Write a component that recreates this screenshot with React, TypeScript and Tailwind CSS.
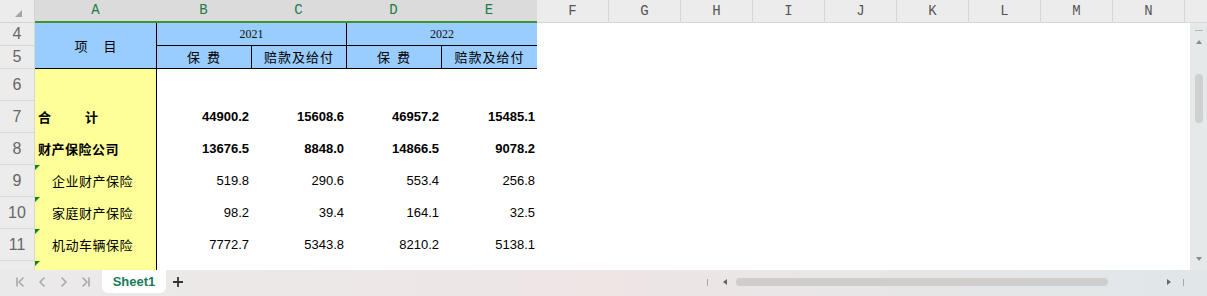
import React from "react";

const colHeads = [
  { label: "A", w: "w-[121px]", sel: true },
  { label: "B", w: "w-[95px]", sel: true },
  { label: "C", w: "w-[95px]", sel: true },
  { label: "D", w: "w-[95px]", sel: true },
  { label: "E", w: "w-[96px]", sel: true },
  { label: "F", w: "w-[72px]", sel: false },
  { label: "G", w: "w-[72px]", sel: false },
  { label: "H", w: "w-[72px]", sel: false },
  { label: "I", w: "w-[72px]", sel: false },
  { label: "J", w: "w-[72px]", sel: false },
  { label: "K", w: "w-[72px]", sel: false },
  { label: "L", w: "w-[72px]", sel: false },
  { label: "M", w: "w-[72px]", sel: false },
  { label: "N", w: "w-[72px]", sel: false },
];

// row 12 is cut off by the sheet tabs, its number is not visible
const rowHeads = [
  { n: "4", h: "h-[23px]" },
  { n: "5", h: "h-[23px]" },
  { n: "6", h: "h-[32px]" },
  { n: "7", h: "h-[32px]" },
  { n: "8", h: "h-[32px]" },
  { n: "9", h: "h-[32px]" },
  { n: "10", h: "h-[32px]" },
  { n: "11", h: "h-[32px]" },
  { n: "", h: "h-[32px]" },
];

type Row = {
  name: string;
  bold?: boolean;
  mark?: boolean;
  values: string[];
};

const rows: Row[] = [
  { name: "", values: ["", "", "", ""] },
  { name: "合计", bold: true, values: ["44900.2", "15608.6", "46957.2", "15485.1"] },
  { name: "财产保险公司", bold: true, values: ["13676.5", "8848.0", "14866.5", "9078.2"] },
  { name: "企业财产保险", mark: true, values: ["519.8", "290.6", "553.4", "256.8"] },
  { name: "家庭财产保险", mark: true, values: ["98.2", "39.4", "164.1", "32.5"] },
  { name: "机动车辆保险", mark: true, values: ["7772.7", "5343.8", "8210.2", "5138.1"] },
  { name: "", mark: true, values: ["", "", "", ""] },
];

const valueWidths = ["w-[95px]", "w-[95px]", "w-[95px]", "w-[96px]"];

const cjk = "font-['Noto_Sans_CJK_SC',sans-serif]";
const num = "font-['Liberation_Sans','Noto_Sans_CJK_SC',sans-serif]";

function Mark() {
  return (
    <span className="absolute left-0 top-0 w-0 h-0 border-t-[5px] border-t-[#13801f] border-r-[5px] border-r-transparent" />
  );
}

function ColumnHeader() {
  return (
    <div className="flex h-[23px] shrink-0 font-['Liberation_Mono',monospace] text-[14px]">
      <div className="w-[35px] h-full bg-[#ececec] border-b border-r border-[#d4d4d4] relative">
        <span className="absolute left-[15px] top-[10px] w-0 h-0 border-b-[7px] border-b-[#a4a4a4] border-l-[7px] border-l-transparent" />
      </div>
      {colHeads.map((c) =>
        c.sel ? (
          <div
            key={c.label}
            className={`${c.w} h-full bg-[#dbdbdb] border-b-2 border-[#3e9430] flex items-center justify-center text-[#1b7a45]`}
          >
            {c.label}
          </div>
        ) : (
          <div
            key={c.label}
            className={`${c.w} h-full bg-[#ececec] border-b border-r border-[#d6d6d6] flex items-center justify-center text-[#555]`}
          >
            {c.label}
          </div>
        )
      )}
      <div className="flex-1 h-full bg-[#ececec] border-b border-[#d6d6d6]" />
    </div>
  );
}

function RowHeader() {
  return (
    <div className="w-[35px] shrink-0 bg-[#ececec] border-r border-[#d8d8d8] flex flex-col font-['Liberation_Sans_Narrow','Liberation_Sans',sans-serif] text-[16px] text-[#666]">
      {rowHeads.map((r, i) => (
        <div
          key={i}
          className={`${r.h} shrink-0 border-b border-[#d6d6d6] flex items-center justify-center`}
        >
          {r.n}
        </div>
      ))}
    </div>
  );
}

function TableHead() {
  return (
    <div className="flex h-[46px] shrink-0">
      <div className={`w-[121px] h-full bg-[#99ccff] border-b border-black flex items-center justify-center gap-[16px] text-[13px] text-black ${cjk}`}>
        <span>项</span>
        <span>目</span>
      </div>
      <div className="flex flex-col w-[381px]">
        <div className="flex h-[23px] font-['Liberation_Serif',serif] text-[12px] text-[#111]">
          <div className="w-[190px] bg-[#99ccff] border-l border-b border-black flex items-center justify-center">
            2021
          </div>
          <div className="w-[191px] bg-[#99ccff] border-l border-b border-black flex items-center justify-center">
            2022
          </div>
        </div>
        <div className={`flex h-[23px] text-[13px] text-black ${cjk}`}>
          {["保费", "赔款及给付", "保费", "赔款及给付"].map((t, i) => (
            <div
              key={i}
              className={`${valueWidths[i]} bg-[#99ccff] border-l border-b border-black flex items-center justify-center tracking-[1px]`}
            >
              {t === "保费" ? (
                <span className="flex gap-[6px]">
                  <span>保</span>
                  <span>费</span>
                </span>
              ) : (
                t
              )}
            </div>
          ))}
        </div>
      </div>
      <div className="flex-1 bg-white" />
    </div>
  );
}

function DataRow({ row }: { row: Row }) {
  return (
    <div className="flex h-[32px] shrink-0">
      <div
        className={`relative w-[121px] h-full bg-[#ffff99] flex items-center text-[13px] text-black ${cjk} ${
          row.bold ? "font-bold pl-[3px]" : "pl-[17px]"
        }`}
      >
        {row.mark && <Mark />}
        {row.name === "合计" ? (
          <span className="flex gap-[34px]">
            <span>合</span>
            <span>计</span>
          </span>
        ) : (
          <span className="tracking-[0.5px]">{row.name}</span>
        )}
      </div>
      {row.values.map((v, i) => (
        <div
          key={i}
          className={`${valueWidths[i]} h-full flex items-center justify-end pr-[2px] text-[13px] text-black ${num} ${
            i === 0 ? "border-l border-black" : ""
          } ${row.bold ? "font-bold" : ""}`}
        >
          {v}
        </div>
      ))}
      <div className="flex-1 bg-white" />
    </div>
  );
}

function VScroll() {
  return (
    <div className="w-[17px] shrink-0 bg-[#e6e9e9] flex flex-col items-center pt-[7px] pb-[9px]">
      <div className="w-[8px] h-[1px] bg-[#b5b8b8]" />
      <span className="mt-[9px] w-0 h-0 border-l-[3px] border-r-[3px] border-b-[4px] border-l-transparent border-r-transparent border-b-[#8a8d8d]" />
      <div className="mt-[30px] w-[8px] h-[49px] rounded-full bg-[#cfd1d1]" />
      <div className="flex-1" />
      <span className="w-0 h-0 border-l-[3px] border-r-[3px] border-t-[4px] border-l-transparent border-r-transparent border-t-[#8a8d8d]" />
    </div>
  );
}

function NavIcon({ d }: { d: string }) {
  return (
    <svg width="12" height="12" viewBox="0 0 12 12" fill="none" stroke="#a8a8a8" strokeWidth="1.6" strokeLinecap="round" strokeLinejoin="round">
      <path d={d} />
    </svg>
  );
}

function BottomBar() {
  return (
    <div className="h-[26px] shrink-0 flex items-start bg-gradient-to-r from-[#ebeaea] via-[#eee5e5] to-[#e0e7e9]">
      <div className="flex items-center h-[24px] pl-[14px] gap-[10px] w-[102px]">
        <NavIcon d="M3 2v8M9 2L5 6l4 4" />
        <NavIcon d="M8 2L4 6l4 4" />
        <NavIcon d="M4 2l4 4-4 4" />
        <NavIcon d="M3 2l4 4-4 4M9 2v8" />
      </div>
      <div className="w-[64px] h-[23px] bg-white rounded-b-[6px] flex items-center justify-center text-[13px] font-bold text-[#1b7a5a] font-['Liberation_Sans',sans-serif]">
        Sheet1
      </div>
      <div className="h-[24px] flex items-center pl-[6px]">
        <svg width="12" height="12" viewBox="0 0 12 12" stroke="#333" strokeWidth="1.8">
          <path d="M6 1v10M1 6h10" />
        </svg>
      </div>
      <div className="flex-1" />
      <div className="h-[24px] flex items-center w-[500px] pr-[23px]">
        <div className="w-[1px] h-[7px] bg-[#a8a8a8]" />
        <span className="ml-[15px] w-0 h-0 border-t-[3px] border-b-[3px] border-r-[4px] border-t-transparent border-b-transparent border-r-[#666]" />
        <div className="ml-[9px] w-[372px] h-[8px] rounded-full bg-[#d0cdcd]" />
        <div className="flex-1" />
        <span className="w-0 h-0 border-t-[3px] border-b-[3px] border-l-[4px] border-t-transparent border-b-transparent border-l-[#666]" />
        <div className="ml-[12px] w-[1px] h-[7px] bg-[#a8a8a8]" />
      </div>
    </div>
  );
}

export default function App() {
  return (
    <div className="w-[1207px] h-[296px] overflow-hidden flex flex-col bg-white">
      <ColumnHeader />
      <div className="flex h-[247px] overflow-hidden">
        <RowHeader />
        <div className="flex-1 flex flex-col overflow-hidden bg-white">
          <TableHead />
          {rows.map((r, i) => (
            <DataRow key={i} row={r} />
          ))}
        </div>
        <VScroll />
      </div>
      <BottomBar />
    </div>
  );
}
